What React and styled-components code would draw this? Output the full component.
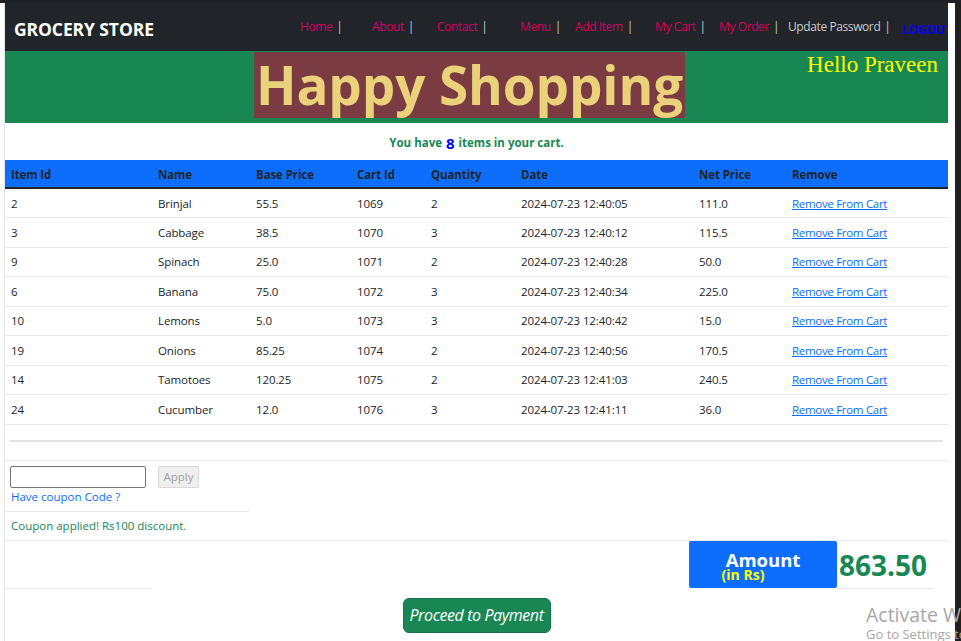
import React from "react";
import styled, { createGlobalStyle } from "styled-components";

const Global = createGlobalStyle`
  html, body { margin: 0; padding: 0; background: #fff; }
  body { font-family: "Open Sans", "Noto Sans", sans-serif; color: #212529; }
  * { box-sizing: border-box; }
`;

const Screen = styled.div`
  width: 961px;
  height: 641px;
  overflow: hidden;
  position: relative;
  display: flex;
  flex-direction: column;
  background: #fff;
`;

const TopStrip = styled.div`
  height: 3px;
  background: #202124;
  flex: none;
`;

const Body = styled.div`
  flex: 1;
  display: flex;
  min-height: 0;
`;

const Page = styled.div`
  width: 951px;
  padding: 0 7px 0 0;
  display: flex;
  flex-direction: column;
  border-left: 1px solid #e4e4e4;
  margin-left: 4px;
  flex: none;
`;

const SideStrip = styled.div`
  flex: 1;
  background: #202020;
`;

const Nav = styled.nav`
  height: 48px;
  background: #212529;
  display: flex;
  align-items: center;
  padding-left: 9px;
  overflow: hidden;
`;

const Brand = styled.div`
  color: #fff;
  font-weight: 700;
  font-size: 17.5px;
  letter-spacing: -0.1px;
  width: 286px;
  margin-top: 4px;
  flex: none;
`;

const NavItem = styled.span`
  font-size: 12px;
  letter-spacing: -0.4px;
  color: ${(p) => p.$color || "#d6005f"};
  width: ${(p) => p.$w}px;
  white-space: nowrap;
  margin-top: -2px;
  flex: none;
`;

const Sep = styled.span`
  color: #c7c9cc;
  margin-left: 4px;
`;

const Logout = styled.span`
  color: #0a00f0;
  font-weight: 700;
  font-size: 12px;
  letter-spacing: -0.2px;
  margin-top: 4px;
  flex: none;
  white-space: nowrap;
`;

const Banner = styled.div`
  height: 72px;
  background: #198754;
  display: flex;
  justify-content: center;
  position: relative;
`;

const Happy = styled.h1`
  margin: 1px 14px 0 0;
  height: 66px;
  background: #7a3b43;
  color: #e9d27a;
  font-size: 53px;
  font-weight: 700;
  line-height: 66px;
  padding: 0 2px;
  letter-spacing: -0.1px;
`;

const Hello = styled.div`
  position: absolute;
  right: 10px;
  top: 1px;
  font-family: "Liberation Serif", "Times New Roman", serif;
  color: #ffff00;
  font-size: 23px;
`;

const CartNote = styled.p`
  margin: 0;
  height: 37px;
  display: flex;
  align-items: center;
  justify-content: center;
  color: #198754;
  font-weight: 700;
  font-size: 11.5px;
  padding-top: 2px;
`;

const Count = styled.span`
  color: #0000ee;
  font-size: 15px;
  margin: 0 4px;
`;

const Table = styled.table`
  width: 943px;
  border-collapse: collapse;
  table-layout: fixed;
  font-size: 11.5px;
  letter-spacing: -0.1px;
`;

const Th = styled.th`
  background: #0d6efd;
  height: 28px;
  text-align: left;
  font-weight: 700;
  padding: 2px 6px 0;
  color: #212529;
  border-bottom: 2px solid #212529;
  width: ${(p) => p.$w}px;
`;

const Td = styled.td`
  height: 29.5px;
  padding: 0 6px;
  color: #212529;
  border-bottom: 1px solid #e6e8eb;
`;

const RemoveLink = styled.a`
  color: #0d6efd;
  text-decoration: underline;
  letter-spacing: -0.3px;
`;

const Spacer = styled.div`
  height: 36px;
  border-bottom: 1px solid #e6e8eb;
  display: flex;
  align-items: center;
  padding: 0 5px;
`;

const Rule = styled.hr`
  width: 100%;
  margin: 0;
  border: 0;
  border-top: 2px solid #e4e4e4;
  margin-top: -2px;
`;

const CouponBox = styled.div`
  width: 244px;
  padding: 5px 5px 0;
  border-bottom: 1px solid #e6e8eb;
  height: 51px;
`;

const CouponRow = styled.div`
  display: flex;
  gap: 12px;
`;

const CouponInput = styled.input`
  width: 136px;
  height: 22px;
  border: 1px solid #767676;
  border-radius: 2px;
  padding: 0 4px;
`;

const ApplyBtn = styled.button`
  height: 22px;
  width: 41px;
  padding: 0;
  font-family: "Open Sans", sans-serif;
  font-size: 11.5px;
  color: #a0a0a0;
  background: #efefef;
  border: 1px solid #d8d8d8;
  border-radius: 2px;
`;

const CouponLink = styled.div`
  color: #0d6efd;
  font-size: 11.5px;
  margin-top: 1px;
  padding-left: 1px;
`;

const Applied = styled.div`
  height: 29px;
  border-bottom: 1px solid #e6e8eb;
  color: #198754;
  font-size: 11.5px;
  display: flex;
  align-items: center;
  padding: 0 6px;
`;

const TotalRow = styled.div`
  display: flex;
  align-items: flex-end;
  height: 48px;
`;

const LeftFoot = styled.div`
  width: 147px;
  border-bottom: 1px solid #e6e8eb;
  margin-right: 537px;
`;

const AmountBox = styled.div`
  width: 148px;
  height: 47px;
  background: #0d6efd;
  border-radius: 2px;
  display: flex;
  flex-direction: column;
  align-items: center;
  justify-content: center;
  line-height: 1;
  font-weight: 700;
  margin-bottom: 1px;
`;

const AmountLabel = styled.div`
  color: #fff;
  font-size: 18.5px;
  margin-top: 5px;
`;

const InRs = styled.div`
  color: #ffff00;
  font-size: 14px;
  margin-top: -1px;
  margin-left: -40px;
`;

const Total = styled.div`
  width: 97px;
  height: 47px;
  border-bottom: 1px solid #e6e8eb;
  color: #198754;
  font-weight: 700;
  font-size: 28px;
  display: flex;
  align-items: center;
  padding-left: 2px;
`;

const PayWrap = styled.div`
  display: flex;
  justify-content: center;
  padding-top: 9px;
`;

const PayBtn = styled.button`
  width: 148px;
  height: 35px;
  background: #198754;
  color: #fff;
  font-family: "Open Sans", sans-serif;
  font-style: italic;
  font-size: 16px;
  border: 1px solid #157347;
  border-radius: 6px;
  padding: 0;
  letter-spacing: -0.4px;
  white-space: nowrap;
`;

const Watermark = styled.div`
  position: absolute;
  left: 866px;
  top: 604px;
  color: #a7a7a7;
  font-size: 19.5px;
  line-height: 1.1;
  white-space: nowrap;
`;

const WatermarkSub = styled.div`
  font-size: 13px;
  margin-top: 2px;
`;

const navItems = [
  { t: "Home", w: 72 },
  { t: "About", w: 65 },
  { t: "Contact", w: 83 },
  { t: "Menu", w: 55 },
  { t: "Add Item", w: 80 },
  { t: "My Cart", w: 64 },
  { t: "My Order", w: 69 },
  { t: "Update Password", w: 114, color: "#c9cbce" },
];

const cols = [
  ["Item Id", 147],
  ["Name", 98],
  ["Base Price", 101],
  ["Cart Id", 74],
  ["Quantity", 90],
  ["Date", 178],
  ["Net Price", 93],
  ["Remove", 162],
];

const rows = [
  ["2", "Brinjal", "55.5", "1069", "2", "2024-07-23 12:40:05", "111.0"],
  ["3", "Cabbage", "38.5", "1070", "3", "2024-07-23 12:40:12", "115.5"],
  ["9", "Spinach", "25.0", "1071", "2", "2024-07-23 12:40:28", "50.0"],
  ["6", "Banana", "75.0", "1072", "3", "2024-07-23 12:40:34", "225.0"],
  ["10", "Lemons", "5.0", "1073", "3", "2024-07-23 12:40:42", "15.0"],
  ["19", "Onions", "85.25", "1074", "2", "2024-07-23 12:40:56", "170.5"],
  ["14", "Tamotoes", "120.25", "1075", "2", "2024-07-23 12:41:03", "240.5"],
  ["24", "Cucumber", "12.0", "1076", "3", "2024-07-23 12:41:11", "36.0"],
];

export default function App() {
  return (
    <>
      <Global />
      <Screen>
        <TopStrip />
        <Body>
          <Page>
            <Nav>
              <Brand>GROCERY STORE</Brand>
              {navItems.map((n) => (
                <NavItem key={n.t} $w={n.w} $color={n.color}>
                  {n.t}
                  <Sep>|</Sep>
                </NavItem>
              ))}
              <Logout>LOGOUT</Logout>
            </Nav>
            <Banner>
              <Happy>Happy Shopping</Happy>
              <Hello>Hello Praveen</Hello>
            </Banner>
            <CartNote>
              You have<Count>8</Count>items in your cart.
            </CartNote>
            <Table>
              <thead>
                <tr>
                  {cols.map(([c, w]) => (
                    <Th key={c} $w={w}>
                      {c}
                    </Th>
                  ))}
                </tr>
              </thead>
              <tbody>
                {rows.map((r) => (
                  <tr key={r[3]}>
                    {r.map((v, i) => (
                      <Td key={i}>{v}</Td>
                    ))}
                    <Td>
                      <RemoveLink href="#">Remove From Cart</RemoveLink>
                    </Td>
                  </tr>
                ))}
              </tbody>
            </Table>
            <Spacer>
              <Rule />
            </Spacer>
            <CouponBox>
              <CouponRow>
                <CouponInput />
                <ApplyBtn disabled>Apply</ApplyBtn>
              </CouponRow>
              <CouponLink>Have coupon Code ?</CouponLink>
            </CouponBox>
            <Applied>Coupon applied! Rs100 discount.</Applied>
            <TotalRow>
              <LeftFoot />
              <AmountBox>
                <AmountLabel>Amount</AmountLabel>
                <InRs>(in Rs)</InRs>
              </AmountBox>
              <Total>863.50</Total>
            </TotalRow>
            <PayWrap>
              <PayBtn>Proceed to Payment</PayBtn>
            </PayWrap>
          </Page>
          <SideStrip />
        </Body>
        <Watermark>
          Activate Windows
          <WatermarkSub>Go to Settings to activate Windows.</WatermarkSub>
        </Watermark>
      </Screen>
    </>
  );
}
